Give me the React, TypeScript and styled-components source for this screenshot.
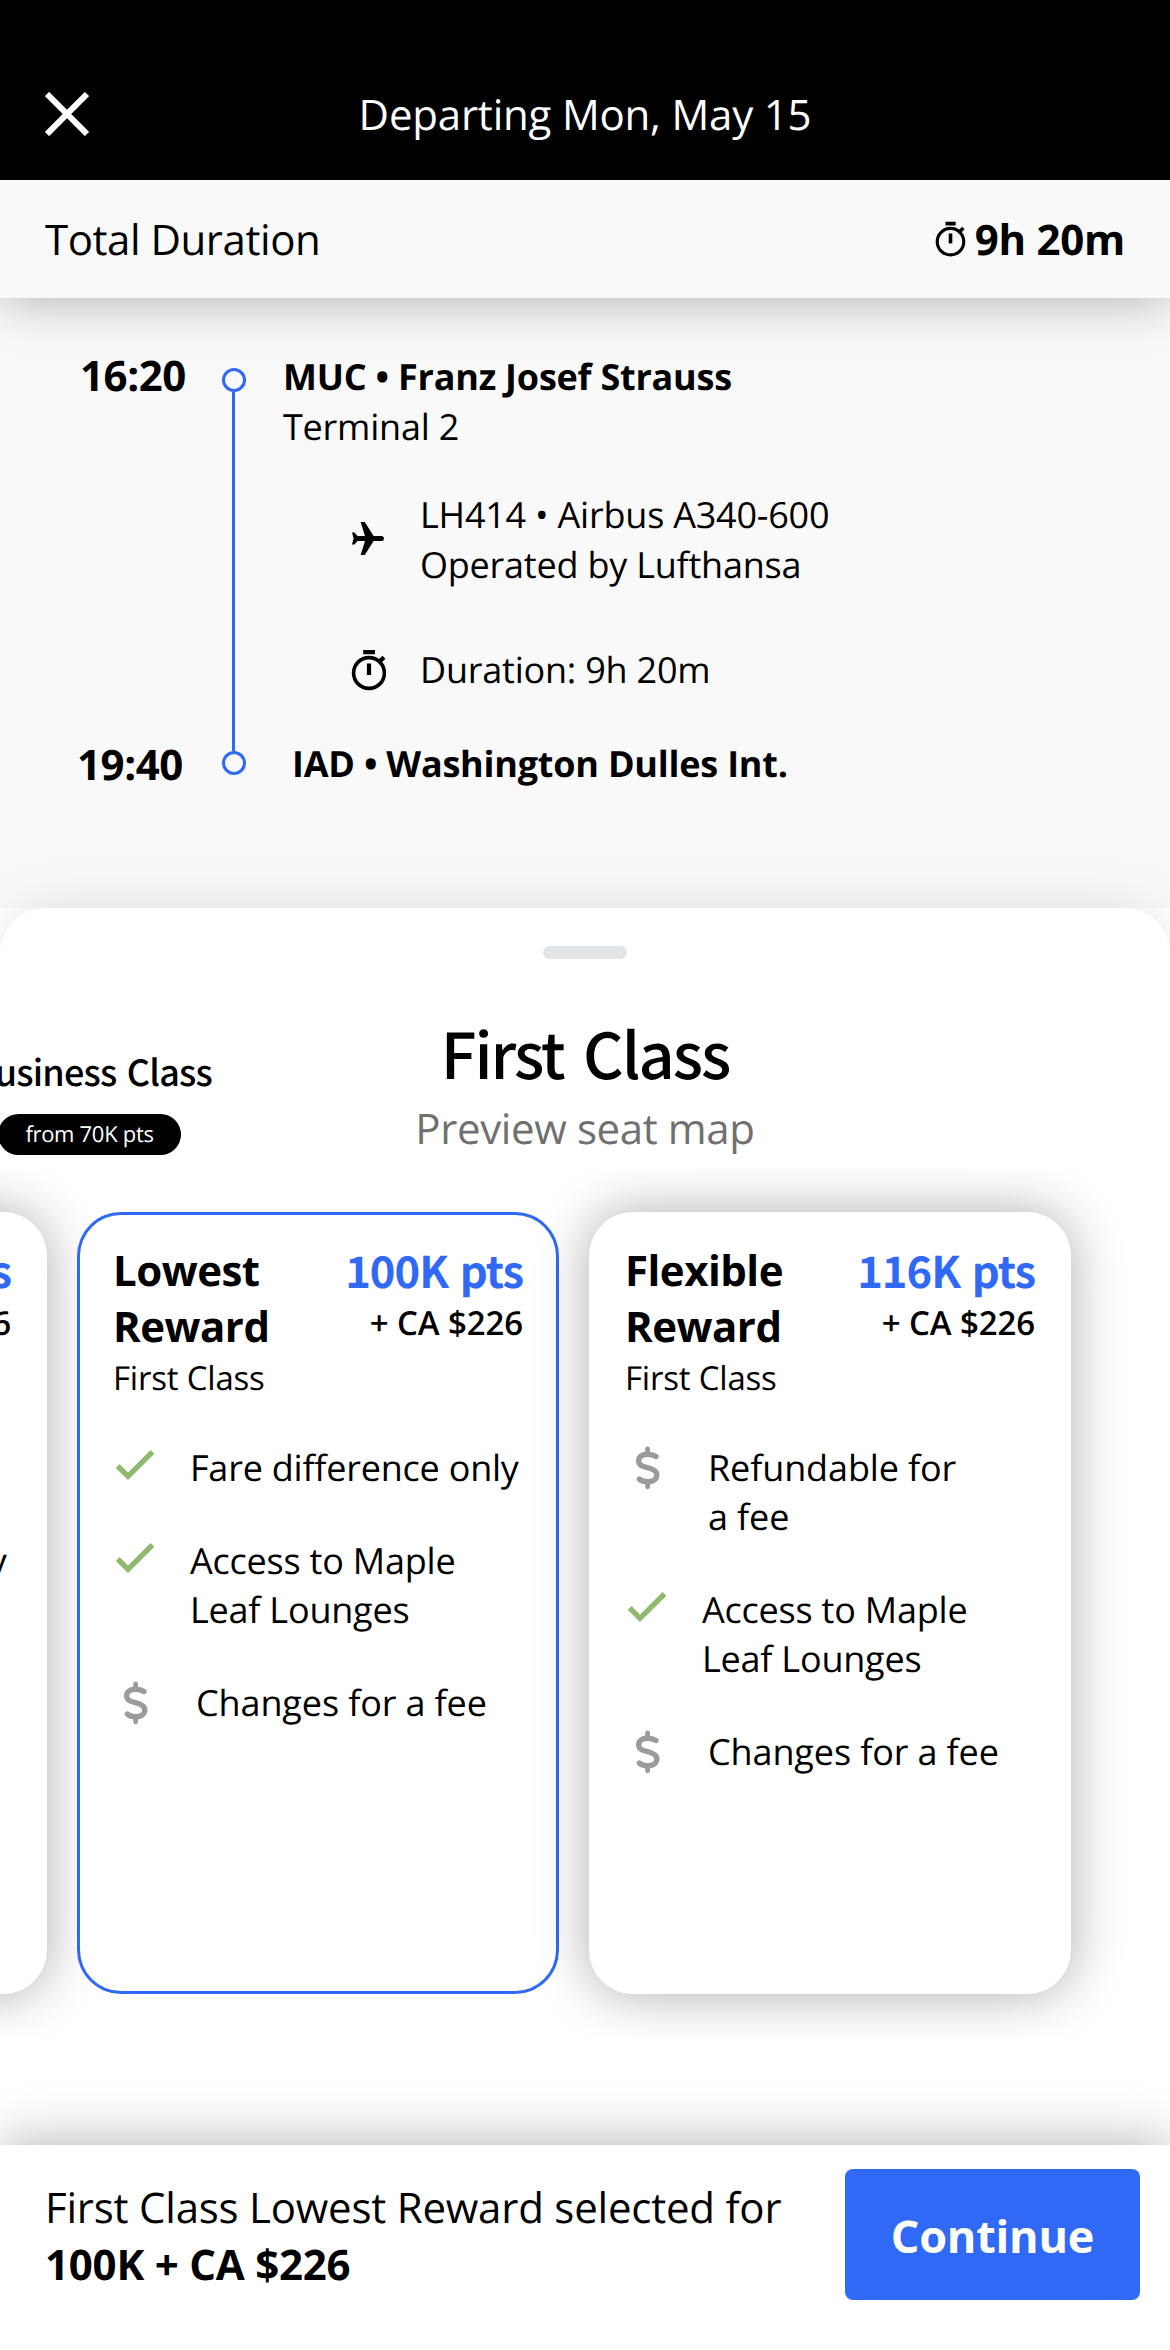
import React from "react";
import styled, { createGlobalStyle } from "styled-components";

const blue = "#2f69f5";
const display = `"Noto Sans CJK JP", "Open Sans", sans-serif`;

const Global = createGlobalStyle`
  * { box-sizing: border-box; }
  body {
    margin: 0; background: #fff; color: #000; font-family: "Open Sans", sans-serif;
    font-kerning: normal; text-rendering: geometricPrecision;
  }
`;
const Screen = styled.main`
  display: flex; flex-direction: column; width: 1170px; height: 2350px; overflow: hidden; background: #fff;
`;
const Header = styled.header`
  display: grid; grid-template-columns: 44px 1fr 44px; align-items: end; height: 180px;
  padding: 0 45px 34px; background: #000; color: #fff; flex: none;
`;
const CloseButton = styled.button`
  display: grid; width: 44px; height: 54px; padding: 0; border: 0; background: none; color: #fff;
`;
const HeaderTitle = styled.h1`
  margin: 0; font-size: 42px; line-height: 63px; font-weight: 400; text-align: center; letter-spacing: -0.2px;
`;
const TotalBar = styled.section`
  display: flex; justify-content: space-between; align-items: center; height: 118px; padding: 0 45px;
  flex: none; background: #f9f9f9; font-size: 42px; box-shadow: 0 0 54px rgba(0, 0, 0, 0.32); z-index: 1;
  clip-path: inset(0 0 -80px 0);
`;
const TotalLabel = styled.span`letter-spacing: -0.45px;`;
const TotalValue = styled.strong`
  display: flex; align-items: center; gap: 9px; font-weight: 700; letter-spacing: -0.25px;
`;
const Itinerary = styled.section`
  display: grid; grid-template-columns: 186px 95px 1fr; grid-template-rows: auto auto auto; align-content: start;
  height: 610px; padding-top: 49px; background: #f9f9f9; flex: none; letter-spacing: -0.22px;
`;
const Time = styled.div<{ $shift?: number }>`
  font-size: 42px; line-height: 58px; font-weight: 700; text-align: right; padding-right: ${(p) => p.$shift ?? 0}px;
  letter-spacing: -0.4px;
`;
const Rail = styled.div`
  grid-row: 1 / span 3; grid-column: 2; display: flex; flex-direction: column; align-items: center; padding-top: 21px;
`;
const Stop = styled.i`width: 24px; height: 24px; border: 3px solid ${blue}; border-radius: 50%;`;
const RailLine = styled.i`width: 3px; height: 359px; background: ${blue};`;
const Airport = styled.div<{ $arrival?: boolean }>`
  grid-column: 3; padding: ${(p) => (p.$arrival ? "3px 0 0 11px" : "5px 0 0 2px")}; font-size: 36px; line-height: 50px;
`;
const Details = styled.div`
  grid-column: 3; display: flex; flex-direction: column; gap: 55px; padding: 38px 0 41px 70px;
`;
const DetailRow = styled.div`
  display: grid; grid-template-columns: 36px 1fr; column-gap: 33px; align-items: center; font-size: 36px; line-height: 50px;
`;
const Sheet = styled.section`
  display: flex; flex-direction: column; align-items: center; height: 1237px; flex: none; padding-top: 38px;
  background: #fff; border-radius: 46px 46px 0 0; box-shadow: 0 0 54px rgba(0, 0, 0, 0.1);
`;
const Handle = styled.div`width: 84px; height: 13px; border-radius: 7px; background: #e1e5e8;`;
const Cabins = styled.div`
  display: grid; grid-template-columns: 212px 746px 212px; width: 1170px; height: 208px; align-items: end;
`;
const SideCabin = styled.div`
  display: flex; flex-direction: column; align-items: flex-end; gap: 18px; padding-bottom: 12px; white-space: nowrap;
  font-family: ${display}; font-size: 36px; line-height: 50px; font-weight: 500; letter-spacing: -0.8px; word-spacing: 3px;
`;
const Pill = styled.span`
  width: 183px; height: 41px; margin-right: 31px; border-radius: 21px; text-align: center; line-height: 41px;
  background: #000; color: #fff; font-family: "Open Sans", sans-serif; font-size: 22px; font-weight: 400;
  letter-spacing: -0.3px; word-spacing: 0;
`;
const MainCabin = styled.div`display: flex; flex-direction: column; align-items: center;`;
const CabinTitle = styled.h2`
  margin: 0 0 7px; font-family: ${display}; font-size: 63px; line-height: 80px; font-weight: 500;
  letter-spacing: -2px; word-spacing: 7px;
`;
const Preview = styled.a`
  font-size: 42px; line-height: 58px; color: #707070; margin-bottom: 9px; letter-spacing: -0.38px;
`;
const Carousel = styled.div`
  display: flex; gap: 30px; width: 1170px; height: 871px; padding: 45px 0 44px; overflow: hidden; justify-content: flex-start;
`;
const Card = styled.article<{ $selected?: boolean; $first?: boolean }>`
  width: 482px; height: 782px; flex: none; padding: 30px 36px; border-radius: 44px; background: #fff;
  margin-left: ${(p) => (p.$first ? -435 : 0)}px; letter-spacing: -0.2px;
  box-shadow: ${(p) => (p.$selected ? `inset 0 0 0 3px ${blue}` : "0 0 54px rgba(0,0,0,.32)")};
`;
const CardHead = styled.div`display: grid; grid-template-columns: 1fr auto; height: 156px;`;
const Fare = styled.h3`
  margin: 1px 0 -1px; font-size: 42px; line-height: 56px; font-weight: 700; white-space: pre-line; letter-spacing: -0.5px;
`;
const FareCabin = styled.div`padding-top: 3px; font-size: 33px; line-height: 42px;`;
const Price = styled.div`text-align: right; font-size: 33px; line-height: 42px; font-weight: 600; letter-spacing: -0.12px;`;
const Points = styled.div`
  margin: -2px 0 2px; font-family: ${display}; color: ${blue}; font-size: 43.5px; line-height: 60px; font-weight: 700;
  letter-spacing: -1px; word-spacing: 3px;
`;
const Features = styled.ul`
  display: flex; flex-direction: column; gap: 44px; list-style: none; margin: 0; padding: 46px 0 0;
`;
const Feature = styled.li<{ $paid?: boolean }>`
  display: grid; grid-template-columns: 44px 1fr; column-gap: ${(p) => (p.$paid ? 39 : 33)}px; align-items: start;
  font-size: 36px; line-height: 49px; white-space: pre-line; letter-spacing: ${(p) => (p.$paid ? -0.12 : -0.22)}px;
`;
const FeatureText = styled.span`margin: -1px 0 1px;`;
const Footer = styled.footer`
  display: flex; justify-content: space-between; align-items: flex-start; height: 205px; flex: none; z-index: 2;
  padding: 24px 30px 0 45px; background: #fff; box-shadow: 0 0 54px rgba(0, 0, 0, 0.32);
`;
const Summary = styled.div`padding-top: 11px; font-size: 42px; line-height: 56.5px; letter-spacing: -0.22px;`;
const Continue = styled.button`
  width: 295px; height: 131px; padding: 2px 0 0; border: 0; border-radius: 8px; background: ${blue}; color: #fff;
  font: 700 45px "Open Sans", sans-serif; letter-spacing: -0.2px;
`;

const CloseIcon = () => (
  <svg width="44" height="44" viewBox="0 0 44 44" fill="none" stroke="currentColor" strokeWidth="6">
    <path d="M2 2 42 42M42 2 2 42" />
  </svg>
);
const TimerIcon = ({ size = 36 }: { size?: number }) => (
  <svg width={size} height={(size * 42) / 36} viewBox="0 0 36 42" fill="none" stroke="currentColor" strokeWidth="3.6">
    <circle cx="18" cy="24" r="15.4" />
    <path d="M12.2 3.1H24M28.5 12.5 33 8.2" strokeWidth="4.2" />
    <path d="M18 14.5V26" strokeWidth="4.2" />
  </svg>
);
const PlaneIcon = () => (
  <svg width="34" height="39" viewBox="0 0 34 39" fill="currentColor">
    <path d="M1 11.6H3.4L6.6 15H14L9.6 1H13.8L22.6 15H30.4A2.5 2.5 0 0 1 30.4 20H22.6L13.8 34H9.6L14 20H6.6L3.4 23.4H1L2.6 17.5Z" />
  </svg>
);
const CheckIcon = () => (
  <svg width="44" height="48" viewBox="0 0 44 48" fill="none" stroke="#8fb96f" strokeWidth="5.4">
    <path d="M4.7 22 15 32.3 39.5 7.8" />
  </svg>
);
const DollarIcon = () => (
  <svg width="44" height="48" viewBox="0 0 44 48" fill="none" stroke="#9b9b9b" strokeWidth="5.4" strokeLinecap="round">
    <path d="M31 12.5C28.6 10.9 26 10.2 22.6 10.2 17.2 10.2 13.7 12.9 13.7 16.7 13.7 21.3 17.6 22.5 22.6 23.7 28 25 31.8 26.7 31.8 31.1 31.8 35.3 28 37.7 22.6 37.7 19 37.7 16.4 36.8 14.4 35.1" />
    <path d="M22.6 5V8.5M22.6 39.5V42.8" strokeWidth="4.8" />
  </svg>
);

type Item = { paid?: boolean; text: string };
const fares: { name: string; points: string; selected?: boolean; items: Item[] }[] = [
  { name: "Standard\nReward", points: "80K pts", items: [{ paid: true, text: "Changes" }, { text: "Fare difference only" }] },
  { name: "Lowest\nReward", points: "100K pts", selected: true, items: [
    { text: "Fare difference only" }, { text: "Access to Maple\nLeaf Lounges" }, { paid: true, text: "Changes for a fee" } ] },
  { name: "Flexible\nReward", points: "116K pts", items: [
    { paid: true, text: "Refundable for\na fee" }, { text: "Access to Maple\nLeaf Lounges" }, { paid: true, text: "Changes for a fee" } ] },
];

export default function App() {
  return (
    <Screen>
      <Global />
      <Header>
        <CloseButton aria-label="Close"><CloseIcon /></CloseButton>
        <HeaderTitle>Departing Mon, May 15</HeaderTitle>
      </Header>
      <TotalBar>
        <TotalLabel>Total Duration</TotalLabel>
        <TotalValue><TimerIcon size={31} />9h 20m</TotalValue>
      </TotalBar>
      <Itinerary>
        <Time>16:20</Time>
        <Rail><Stop /><RailLine /><Stop /></Rail>
        <Airport><b>MUC • Franz Josef Strauss</b><br />Terminal 2</Airport>
        <Details>
          <DetailRow><PlaneIcon /><span>LH414 • Airbus A340-600<br />Operated by Lufthansa</span></DetailRow>
          <DetailRow><TimerIcon /><span>Duration: 9h 20m</span></DetailRow>
        </Details>
        <Time $shift={3}>19:40</Time>
        <Airport $arrival><b>IAD • Washington Dulles Int.</b></Airport>
      </Itinerary>
      <Sheet>
        <Handle />
        <Cabins>
          <SideCabin>Business Class<Pill>from 70K pts</Pill></SideCabin>
          <MainCabin><CabinTitle>First Class</CabinTitle><Preview>Preview seat map</Preview></MainCabin>
        </Cabins>
        <Carousel>
          {fares.map((f, i) => (
            <Card key={f.name} $selected={f.selected} $first={i === 0}>
              <CardHead>
                <div><Fare>{f.name}</Fare><FareCabin>First Class</FareCabin></div>
                <Price><Points>{f.points}</Points>+ CA $226</Price>
              </CardHead>
              <Features>
                {f.items.map((it) => (
                  <Feature key={it.text} $paid={it.paid}>
                    {it.paid ? <DollarIcon /> : <CheckIcon />}
                    <FeatureText>{it.text}</FeatureText>
                  </Feature>
                ))}
              </Features>
            </Card>
          ))}
        </Carousel>
      </Sheet>
      <Footer>
        <Summary>First Class Lowest Reward selected for<br /><b>100K + CA $226</b></Summary>
        <Continue>Continue</Continue>
      </Footer>
    </Screen>
  );
}
